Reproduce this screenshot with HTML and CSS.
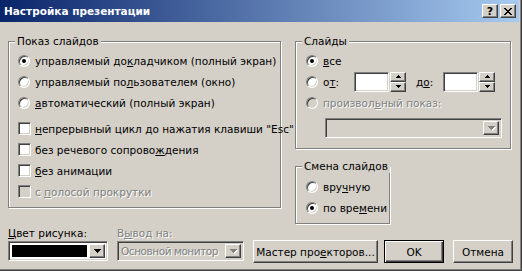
FILE: index.html
```html
<!DOCTYPE html>
<html>
<head>
    <title>Настройка презентации</title>
    <link rel="stylesheet" href="styles.css">
</head>
<body>
    <div class="window">
        <div class="titlebar">
            <span class="title">Настройка презентации</span>
            <div class="caption">
                <span class="cbtn help">?</span>
                <span class="cbtn">
                    <svg width="8" height="7" viewBox="0 0 8 7"><path d="M0 0h2v1H0zM6 0h2v1H6zM1 1h2v1H1zM5 1h2v1H5zM2 2h4v1H2zM3 3h2v1H3zM2 4h4v1H2zM1 5h2v1H1zM5 5h2v1H5zM0 6h2v1H0zM6 6h2v1H6z"/></svg>
                </span>
            </div>
        </div>
        <div class="content">
            <div class="top">
                <fieldset class="group show">
                    <legend>Показ слайдов</legend>
                    <div class="opt"><span class="mark"><span class="radio on"></span></span><span>управляемый до<u>к</u>ладчиком (полный экран)</span></div>
                    <div class="opt"><span class="mark"><span class="radio"></span></span><span>управляемый по<u>л</u>ьзователем (окно)</span></div>
                    <div class="opt"><span class="mark"><span class="radio"></span></span><span><u>а</u>втоматический (полный экран)</span></div>
                    <div class="checks">
                        <div class="opt"><span class="mark"><span class="check"></span></span><span><u>н</u>епрерывный цикл до нажатия клавиши "Esc"</span></div>
                        <div class="opt"><span class="mark"><span class="check"></span></span><span>без речевого сопрово<u>ж</u>дения</span></div>
                        <div class="opt"><span class="mark"><span class="check"></span></span><span><u>б</u>ез анимации</span></div>
                        <div class="opt disabled"><span class="mark"><span class="check off"></span></span><span>с <u>п</u>олосой прокрутки</span></div>
                    </div>
                </fieldset>
                <div class="right">
                    <fieldset class="group slides">
                        <legend>Слайды</legend>
                        <div class="opt"><span class="mark"><span class="radio on"></span></span><span><u>в</u>се</span></div>
                        <div class="opt">
                            <span class="mark"><span class="radio"></span></span>
                            <span class="from">о<u>т</u>:</span>
                            <div class="spin">
                                <span class="spin-field"></span>
                                <span class="spin-btns">
                                    <span class="sb"><svg width="5" height="3" viewBox="0 0 5 3"><path d="M2 0h1v1H2zM1 1h3v1H1zM0 2h5v1H0z"/></svg></span>
                                    <span class="sb"><svg width="5" height="3" viewBox="0 0 5 3"><path d="M0 0h5v1H0zM1 1h3v1H1zM2 2h1v1H2z"/></svg></span>
                                </span>
                            </div>
                            <span class="to">д<u>о</u>:</span>
                            <div class="spin">
                                <span class="spin-field"></span>
                                <span class="spin-btns">
                                    <span class="sb"><svg width="5" height="3" viewBox="0 0 5 3"><path d="M2 0h1v1H2zM1 1h3v1H1zM0 2h5v1H0z"/></svg></span>
                                    <span class="sb"><svg width="5" height="3" viewBox="0 0 5 3"><path d="M0 0h5v1H0zM1 1h3v1H1zM2 2h1v1H2z"/></svg></span>
                                </span>
                            </div>
                        </div>
                        <div class="opt disabled"><span class="mark"><span class="radio off"></span></span><span>произвол<u>ь</u>ный показ:</span></div>
                        <div class="combo custom disabled">
                            <span class="combo-value"></span>
                            <span class="drop"><svg width="7" height="4" viewBox="0 0 7 4"><path d="M0 0h7v1H0zM1 1h5v1H1zM2 2h3v1H2zM3 3h1v1H3z"/></svg></span>
                        </div>
                    </fieldset>
                    <fieldset class="group change">
                        <legend>Смена слайдов</legend>
                        <div class="opt"><span class="mark"><span class="radio"></span></span><span>вру<u>ч</u>ную</span></div>
                        <div class="opt"><span class="mark"><span class="radio on"></span></span><span>по вре<u>м</u>ени</span></div>
                    </fieldset>
                </div>
            </div>
            <div class="bottom">
                <div class="field color">
                    <div class="label"><u>Ц</u>вет рисунка:</div>
                    <div class="combo">
                        <span class="combo-value"><span class="swatch"></span></span>
                        <span class="drop"><svg width="7" height="4" viewBox="0 0 7 4"><path d="M0 0h7v1H0zM1 1h5v1H1zM2 2h3v1H2zM3 3h1v1H3z"/></svg></span>
                    </div>
                </div>
                <div class="field output disabled">
                    <div class="label">В<u>ы</u>вод на:</div>
                    <div class="combo">
                        <span class="combo-value monitor">Основной монитор</span>
                        <span class="drop"><svg width="7" height="4" viewBox="0 0 7 4"><path d="M0 0h7v1H0zM1 1h5v1H1zM2 2h3v1H2zM3 3h1v1H3z"/></svg></span>
                    </div>
                </div>
                <div class="buttons">
                    <button class="btn wizard">Мастер про<u>е</u>кторов...</button>
                    <button class="btn ok">OK</button>
                    <button class="btn cancel">Отмена</button>
                </div>
            </div>
        </div>
    </div>
</body>
</html>
```

FILE: styles.css
```css
body {
    margin: 0;
    font-family: "DejaVu Sans", sans-serif;
    font-size: 10.5px;
    color: #000;
}
.window {
    width: 522px;
    height: 271px;
    box-sizing: border-box;
    background: #d4d0c8;
    border-right: 1px solid #404040;
    border-bottom: 1px solid #404040;
    box-shadow: inset -1px -1px #808080;
    padding: 0 2px 2px 0;
    overflow: hidden;
}
.titlebar {
    height: 22px;
    display: flex;
    align-items: center;
    justify-content: space-between;
    padding: 0 3px 0 4px;
    background: linear-gradient(to right, #0a246a, #a6caf0);
    color: #fff;
    font-weight: bold;
}
.caption {
    display: flex;
    gap: 2px;
}
.cbtn {
    width: 16px;
    height: 14px;
    box-sizing: border-box;
    background: #d4d0c8;
    border: 1px solid;
    border-color: #fff #404040 #404040 #fff;
    box-shadow: inset -1px -1px #808080;
    display: flex;
    align-items: center;
    justify-content: center;
    color: #000;
    font-size: 11px;
}
.cbtn svg {
    display: block;
}
.content {
    padding: 13px 6px 0 8px;
}
.top {
    display: flex;
    gap: 14px;
    align-items: flex-start;
    height: 188px;
}
.group {
    margin: 0;
    border: 1px solid #808080;
    box-shadow: inset 1px 1px #fff, 1px 1px #fff;
    min-width: 0;
}
.group legend {
    line-height: 13px;
    padding: 0 2px;
    background: #d4d0c8;
    white-space: nowrap;
}
.show {
    width: 273px;
    box-sizing: border-box;
    padding: 2px 0 5px 9px;
}
.show legend {
    margin-left: -3px;
}
.right {
    width: 217px;
}
.slides {
    box-sizing: border-box;
    width: 216px;
    padding: 2px 0 10px 10px;
}
.slides legend,
.change legend {
    margin-left: -4px;
}
.change {
    box-sizing: border-box;
    width: 95px;
    margin-top: 11px;
    padding: 3px 0 5px 10px;
}
.opt {
    display: flex;
    align-items: center;
    height: 21px;
    white-space: nowrap;
}
.checks {
    margin-top: 5px;
}
.mark {
    width: 17px;
    flex: none;
    display: flex;
}
.radio {
    width: 12px;
    height: 12px;
    box-sizing: border-box;
    border-radius: 50%;
    background: #fff;
    border: 1px solid;
    border-color: #808080 #fff #fff #808080;
    box-shadow: inset 1px 1px #404040, inset -1px -1px #d4d0c8;
    display: flex;
    align-items: center;
    justify-content: center;
}
.radio.on::after {
    content: "";
    width: 4px;
    height: 4px;
    border-radius: 50%;
    background: #000;
}
.radio.off,
.check.off {
    background: #d4d0c8;
}
.check {
    width: 13px;
    height: 13px;
    box-sizing: border-box;
    background: #fff;
    border: 1px solid;
    border-color: #808080 #fff #fff #808080;
    box-shadow: inset 1px 1px #404040, inset -1px -1px #d4d0c8;
}
.disabled {
    color: #808080;
    text-shadow: 1px 1px #fff;
}
.from {
    width: 31px;
}
.to {
    width: 27px;
    margin-left: 10px;
}
.spin {
    display: flex;
    gap: 1px;
}
.spin-field {
    width: 35px;
    height: 20px;
    box-sizing: border-box;
    background: #fff;
    border: 1px solid;
    border-color: #808080 #fff #fff #808080;
    box-shadow: inset 1px 1px #404040, inset -1px -1px #d4d0c8;
}
.spin-btns {
    display: flex;
    flex-direction: column;
    width: 16px;
    height: 20px;
}
.sb {
    flex: 1;
    box-sizing: border-box;
    border: 1px solid;
    border-color: #fff #404040 #404040 #fff;
    box-shadow: inset -1px -1px #808080;
    display: flex;
    align-items: center;
    justify-content: center;
}
.sb svg,
.drop svg {
    display: block;
}
.combo {
    display: flex;
    height: 20px;
    box-sizing: border-box;
    padding: 2px;
    background: #fff;
    border: 1px solid;
    border-color: #808080 #fff #fff #808080;
    box-shadow: inset 1px 1px #404040, inset -1px -1px #d4d0c8;
}
.combo-value {
    flex: 1;
    display: flex;
    align-items: center;
    padding-left: 1px;
    white-space: nowrap;
    overflow: hidden;
}
.monitor {
    letter-spacing: -0.45px;
}
.drop {
    width: 16px;
    flex: none;
    box-sizing: border-box;
    background: #d4d0c8;
    border: 1px solid;
    border-color: #fff #404040 #404040 #fff;
    box-shadow: inset -1px -1px #808080;
    display: flex;
    align-items: center;
    justify-content: center;
    text-shadow: none;
}
.disabled .combo,
.combo.disabled {
    background: #d4d0c8;
}
.disabled .drop svg {
    fill: #808080;
    filter: drop-shadow(1px 1px 0 #fff);
}
.custom {
    width: 177px;
    margin: 5px 0 0 19px;
}
.swatch {
    flex: 1;
    align-self: stretch;
    background: #000;
    margin: 1px 2px 1px 0;
}
.bottom {
    display: flex;
    align-items: flex-end;
    margin-top: 4px;
}
.field {
    margin-bottom: 2px;
}
.label {
    line-height: 13px;
    margin-bottom: 1px;
    white-space: nowrap;
}
.color {
    width: 100px;
}
.output {
    width: 127px;
    margin-left: 9px;
}
.buttons {
    display: flex;
    margin-left: 9px;
}
.btn {
    height: 23px;
    box-sizing: border-box;
    padding: 0;
    font: inherit;
    color: #000;
    background: #d4d0c8;
    border: 1px solid;
    border-color: #fff #404040 #404040 #fff;
    box-shadow: inset -1px -1px #808080;
}
.wizard {
    width: 125px;
}
.ok {
    width: 60px;
    margin-left: 6px;
    border-color: #000;
    box-shadow: inset 1px 1px #fff, inset -1px -1px #404040, inset -2px -2px #808080;
}
.cancel {
    width: 60px;
    margin-left: 9px;
}
```
